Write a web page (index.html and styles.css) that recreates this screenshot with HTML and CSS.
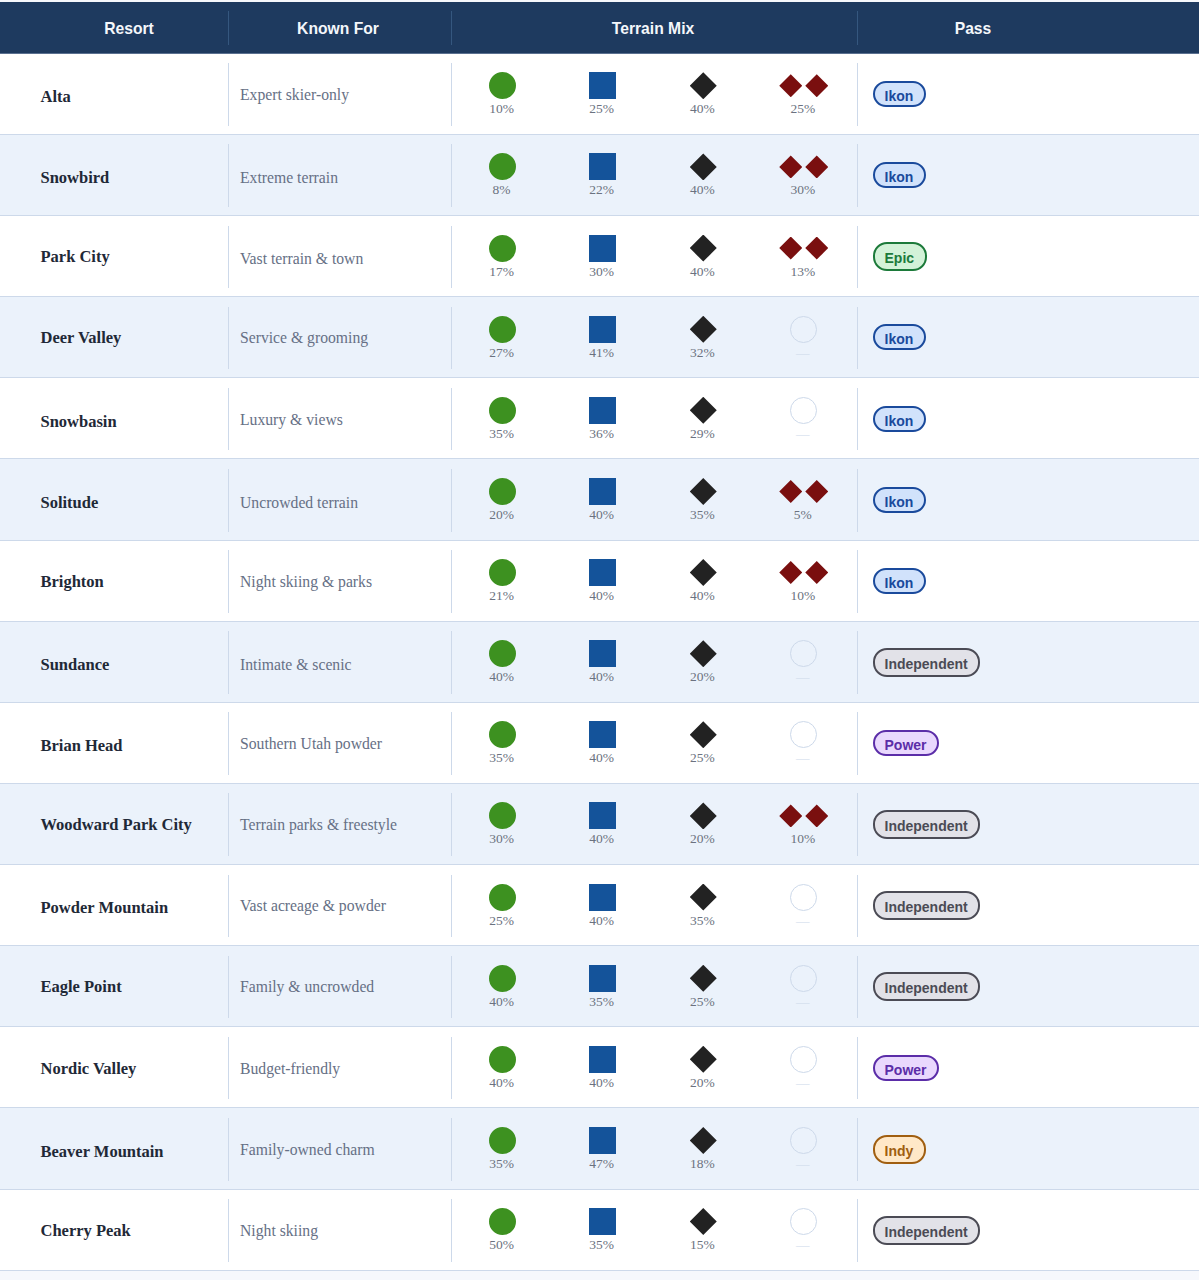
FILE: index.html
```html
<!DOCTYPE html>
<html lang="en">
<head>
<meta charset="utf-8">
<title>Utah Resorts</title>
<link rel="stylesheet" href="styles.css">
</head>
<body>
<div class="table">
<div class="row head"><div class="c c1"><span>Resort</span></div><div class="c c2"><span>Known For</span></div><div class="c c3"><span>Terrain Mix</span></div><div class="c c4"><span>Pass</span></div></div>

<div class="row"><div class="c c1"><b class="nd">Alta</b></div><div class="c c2"><span class="de">Expert skier-only</span></div><div class="c c3"><div class="t"><i class="green"></i><small>10%</small></div><div class="t"><i class="blue"></i><small>25%</small></div><div class="t"><i class="black"></i><small>40%</small></div><div class="t"><div class="dbl"><i class="red"></i><i class="red"></i></div><small>25%</small></div></div><div class="c c4"><em class="pill ikon">Ikon</em></div></div>

<div class="row"><div class="c c1"><b class="nd">Snowbird</b></div><div class="c c2"><span class="nd">Extreme terrain</span></div><div class="c c3"><div class="t"><i class="green"></i><small>8%</small></div><div class="t"><i class="blue"></i><small>22%</small></div><div class="t"><i class="black"></i><small>40%</small></div><div class="t"><div class="dbl"><i class="red"></i><i class="red"></i></div><small>30%</small></div></div><div class="c c4"><em class="pill ikon">Ikon</em></div></div>

<div class="row"><div class="c c1"><b class="de">Park City</b></div><div class="c c2"><span class="nd">Vast terrain &amp; town</span></div><div class="c c3"><div class="t"><i class="green"></i><small>17%</small></div><div class="t"><i class="blue"></i><small>30%</small></div><div class="t"><i class="black"></i><small>40%</small></div><div class="t"><div class="dbl"><i class="red"></i><i class="red"></i></div><small>13%</small></div></div><div class="c c4"><em class="pill epic">Epic</em></div></div>

<div class="row"><div class="c c1"><b class="de">Deer Valley</b></div><div class="c c2"><span class="de">Service &amp; grooming</span></div><div class="c c3"><div class="t"><i class="green"></i><small>27%</small></div><div class="t"><i class="blue"></i><small>41%</small></div><div class="t"><i class="black"></i><small>32%</small></div><div class="t"><i class="none"></i><small class="dash">—</small></div></div><div class="c c4"><em class="pill ikon">Ikon</em></div></div>

<div class="row"><div class="c c1"><b class="nd">Snowbasin</b></div><div class="c c2"><span class="de">Luxury &amp; views</span></div><div class="c c3"><div class="t"><i class="green"></i><small>35%</small></div><div class="t"><i class="blue"></i><small>36%</small></div><div class="t"><i class="black"></i><small>29%</small></div><div class="t"><i class="none"></i><small class="dash">—</small></div></div><div class="c c4"><em class="pill ikon">Ikon</em></div></div>

<div class="row"><div class="c c1"><b class="nd">Solitude</b></div><div class="c c2"><span class="nd">Uncrowded terrain</span></div><div class="c c3"><div class="t"><i class="green"></i><small>20%</small></div><div class="t"><i class="blue"></i><small>40%</small></div><div class="t"><i class="black"></i><small>35%</small></div><div class="t"><div class="dbl"><i class="red"></i><i class="red"></i></div><small>5%</small></div></div><div class="c c4"><em class="pill ikon">Ikon</em></div></div>

<div class="row"><div class="c c1"><b class="de">Brighton</b></div><div class="c c2"><span class="de">Night skiing &amp; parks</span></div><div class="c c3"><div class="t"><i class="green"></i><small>21%</small></div><div class="t"><i class="blue"></i><small>40%</small></div><div class="t"><i class="black"></i><small>40%</small></div><div class="t"><div class="dbl"><i class="red"></i><i class="red"></i></div><small>10%</small></div></div><div class="c c4"><em class="pill ikon">Ikon</em></div></div>

<div class="row"><div class="c c1"><b class="nd">Sundance</b></div><div class="c c2"><span class="nd">Intimate &amp; scenic</span></div><div class="c c3"><div class="t"><i class="green"></i><small>40%</small></div><div class="t"><i class="blue"></i><small>40%</small></div><div class="t"><i class="black"></i><small>20%</small></div><div class="t"><i class="none"></i><small class="dash">—</small></div></div><div class="c c4"><em class="pill ind">Independent</em></div></div>

<div class="row"><div class="c c1"><b class="nd">Brian Head</b></div><div class="c c2"><span class="de">Southern Utah powder</span></div><div class="c c3"><div class="t"><i class="green"></i><small>35%</small></div><div class="t"><i class="blue"></i><small>40%</small></div><div class="t"><i class="black"></i><small>25%</small></div><div class="t"><i class="none"></i><small class="dash">—</small></div></div><div class="c c4"><em class="pill power">Power</em></div></div>

<div class="row"><div class="c c1"><b class="de">Woodward Park City</b></div><div class="c c2"><span class="de">Terrain parks &amp; freestyle</span></div><div class="c c3"><div class="t"><i class="green"></i><small>30%</small></div><div class="t"><i class="blue"></i><small>40%</small></div><div class="t"><i class="black"></i><small>20%</small></div><div class="t"><div class="dbl"><i class="red"></i><i class="red"></i></div><small>10%</small></div></div><div class="c c4"><em class="pill ind">Independent</em></div></div>

<div class="row"><div class="c c1"><b class="nd">Powder Mountain</b></div><div class="c c2"><span class="de">Vast acreage &amp; powder</span></div><div class="c c3"><div class="t"><i class="green"></i><small>25%</small></div><div class="t"><i class="blue"></i><small>40%</small></div><div class="t"><i class="black"></i><small>35%</small></div><div class="t"><i class="none"></i><small class="dash">—</small></div></div><div class="c c4"><em class="pill ind">Independent</em></div></div>

<div class="row"><div class="c c1"><b class="de">Eagle Point</b></div><div class="c c2"><span class="de">Family &amp; uncrowded</span></div><div class="c c3"><div class="t"><i class="green"></i><small>40%</small></div><div class="t"><i class="blue"></i><small>35%</small></div><div class="t"><i class="black"></i><small>25%</small></div><div class="t"><i class="none"></i><small class="dash">—</small></div></div><div class="c c4"><em class="pill ind">Independent</em></div></div>

<div class="row"><div class="c c1"><b class="de">Nordic Valley</b></div><div class="c c2"><span class="de">Budget-friendly</span></div><div class="c c3"><div class="t"><i class="green"></i><small>40%</small></div><div class="t"><i class="blue"></i><small>40%</small></div><div class="t"><i class="black"></i><small>20%</small></div><div class="t"><i class="none"></i><small class="dash">—</small></div></div><div class="c c4"><em class="pill power">Power</em></div></div>

<div class="row"><div class="c c1"><b class="nd">Beaver Mountain</b></div><div class="c c2"><span class="de">Family-owned charm</span></div><div class="c c3"><div class="t"><i class="green"></i><small>35%</small></div><div class="t"><i class="blue"></i><small>47%</small></div><div class="t"><i class="black"></i><small>18%</small></div><div class="t"><i class="none"></i><small class="dash">—</small></div></div><div class="c c4"><em class="pill indy">Indy</em></div></div>

<div class="row"><div class="c c1"><b class="de">Cherry Peak</b></div><div class="c c2"><span class="de">Night skiing</span></div><div class="c c3"><div class="t"><i class="green"></i><small>50%</small></div><div class="t"><i class="blue"></i><small>35%</small></div><div class="t"><i class="black"></i><small>15%</small></div><div class="t"><i class="none"></i><small class="dash">—</small></div></div><div class="c c4"><em class="pill ind">Independent</em></div></div>
</div>
</body>
</html>
```
FILE: styles.css
```css
html, body { margin: 0; padding: 0; background: #f6f8fc; }
body { padding-top: 2px; height: 1278px; overflow: hidden; font-family: "Liberation Serif", serif; }
.table { width: 1199px; }
.row {
  display: grid;
  grid-template-columns: 228px 223px 406px 342px;
  height: 81.14px;
  box-sizing: border-box;
  padding: 9.5px 0 8px;
  border-bottom: 1px solid #cdd9ea;
  background: #fff;
}
.row:nth-child(odd) { background: #ebf2fb; }
.c { display: flex; align-items: center; min-width: 0; }
.c2, .c3, .c4 { border-left: 1px solid #cdd9ea; }
.c1 { padding-left: 40.5px; }
.c1 b { font-size: 16.5px; font-weight: 700; color: #1f2937; }
.c2 { padding-left: 11px; font-size: 15.7px; color: #667085; }
.nd { padding-top: 5px; }
.de { padding-top: 1px; }
.c3 { display: grid; grid-template-columns: 99px 101px 100.5px 100.5px; padding: 9px 0 0; align-items: start; align-content: start; }
.c4 { padding-left: 14.5px; }
.row.head {
  height: 51.8px;
  padding: 9px 0 8px;
  background: #1e3a5f;
  border-bottom: 1px solid #5a7090;
  font-family: "Liberation Sans", sans-serif;
  font-weight: 700;
}
.head .c { display: flex; align-items: center; justify-content: center; padding: 2px 0 0; border-color: #35577f; color: #f4f7fb; font-size: 15.68px; }
.head .c1 { padding-left: 30px; }
.head .c2 { padding-right: 4px; }
.head .c3 { padding-right: 3px; }
.head .c4 { padding-right: 111px; }
.t { display: flex; flex-direction: column; align-items: center; }
.t > i { display: block; width: 27px; height: 27px; box-sizing: border-box; margin-left: 2px; }
.t .green { background: #3d9120; border-radius: 50%; }
.t .blue { background: #14539a; }
.t .none { border: 1px solid #cdd9ea; border-radius: 50%; }
.t .black { background: #222; clip-path: polygon(50% 0, 100% 50%, 50% 100%, 0 50%); }
.dbl { display: flex; gap: 3px; height: 27px; align-items: center; margin-left: 2px; }
.red { display: block; width: 23px; height: 23px; background: #7a0f0f; clip-path: polygon(50% 0, 100% 50%, 50% 100%, 0 50%); }
small { font-size: 13.5px; line-height: 16px; color: #6b7280; margin-top: 2px; }
.dash { color: #cdd9ea; }
.pill {
  font-family: "Liberation Sans", sans-serif;
  font-style: normal;
  font-weight: 700;
  font-size: 14px;
  line-height: 16px;
  padding: 6px 10px 3px;
  border: 2px solid;
  border-radius: 14px;
}
.ikon { background: #d1e2fb; border-color: #1a4a9c; color: #1a4a9c; padding: 5px 11px 1px 10px; margin-bottom: 1px; }
.epic { background: #d3f2d8; border-color: #1c7a3a; color: #1c7a3a; padding-right: 11px; }
.power { background: #e9d8fd; border-color: #5b2da8; color: #5b2da8; padding: 5px 10px 1px; margin-bottom: 1px; }
.ind { background: #e2e2e8; border-color: #4b4b55; color: #4b4b55; }
.indy { background: #ffe8c8; border-color: #a05e10; color: #a05e10; padding-right: 11px; }
```
